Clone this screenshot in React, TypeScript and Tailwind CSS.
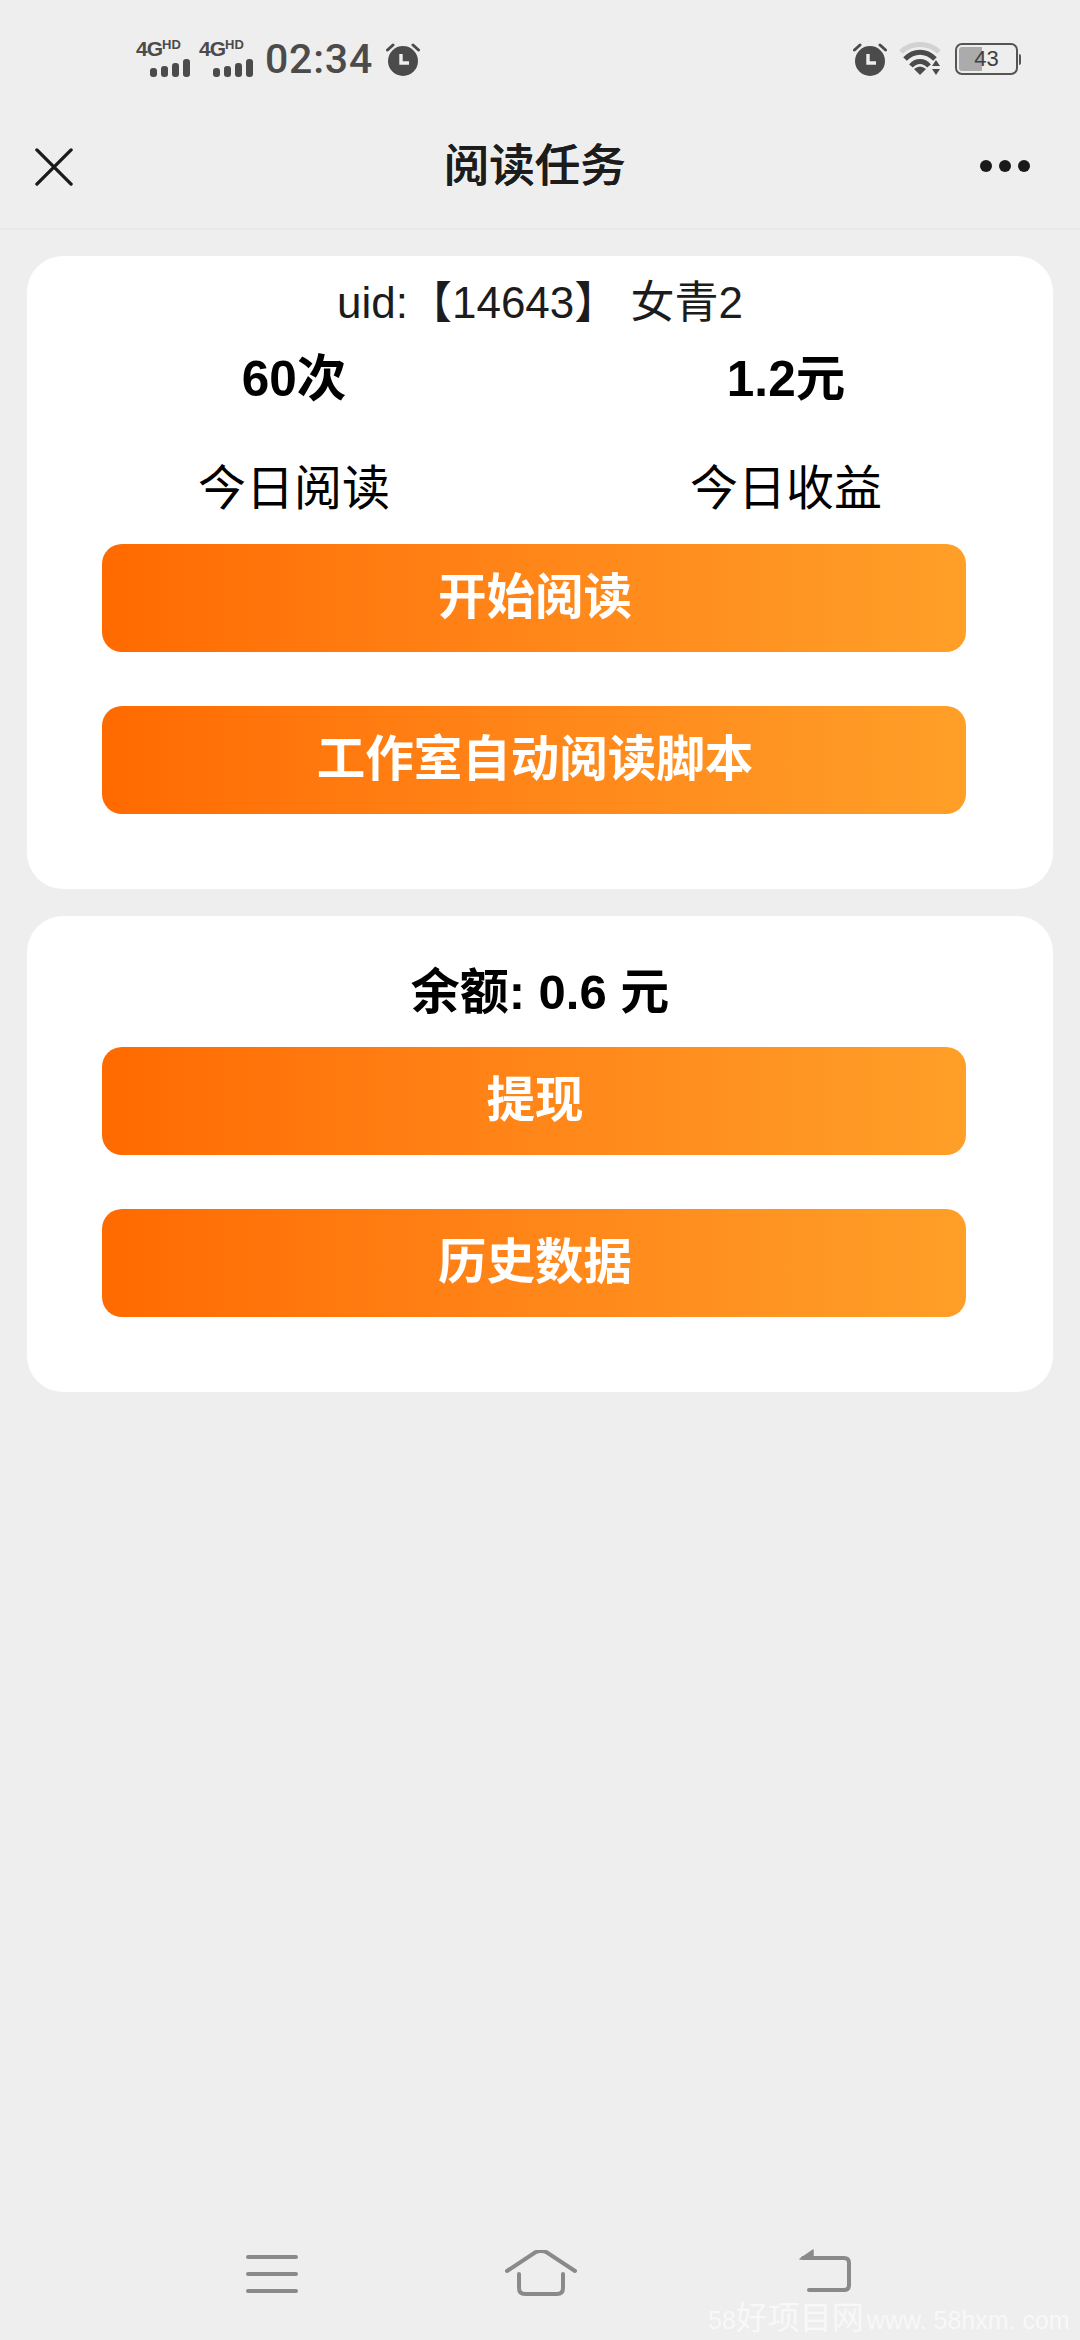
const CJK = "font-['Liberation_Sans','Noto_Sans_CJK_SC',sans-serif]";

function Signal() {
  return (
    <div className="relative h-[36px] w-[54px] text-[#4b4b4b]">
      <span className="absolute left-0 top-[-5px] text-[21px] font-bold leading-[26px] tracking-[-1px]">4G</span>
      <span className="absolute left-[26px] top-[-3px] text-[13px] font-bold leading-[14px]">HD</span>
      <div className="absolute bottom-0 right-0 flex items-end gap-[4px]">
        <i className="block h-[9px] w-[7px] rounded-[3px] bg-[#4b4b4b]" />
        <i className="block h-[11px] w-[7px] rounded-[3px] bg-[#4b4b4b]" />
        <i className="block h-[14px] w-[7px] rounded-[3px] bg-[#4b4b4b]" />
        <i className="block h-[18px] w-[7px] rounded-[3px] bg-[#4b4b4b]" />
      </div>
    </div>
  );
}

function Alarm() {
  return (
    <svg width="34" height="34" viewBox="0 0 34 34">
      <circle cx="17" cy="19" r="15" fill="#4b4b4b" />
      <path d="M1.500 8 L7 3 M32.500 8 L27 3" stroke="#4b4b4b" strokeWidth="3" strokeLinecap="round" />
      <path d="M15 12 V21 H23" fill="none" stroke="#eee" strokeWidth="3.400" />
    </svg>
  );
}

function Wifi() {
  return (
    <svg width="44" height="34" viewBox="0 0 44 34">
      <path d="M2 10 C12 0 30 0 40 10" fill="none" stroke="#d2d2d2" strokeWidth="5" />
      <path d="M6 17 C15 8 27 8 36 17" fill="none" stroke="#4b4b4b" strokeWidth="5" />
      <path d="M12 24 C17 18 25 18 30 24" fill="none" stroke="#4b4b4b" strokeWidth="5" />
      <path d="M15 27 Q21 22 27 27 L21 33 Z" fill="#4b4b4b" />
      <path d="M37 18 L41 24 H33 Z M33 27 H41 L37 33 Z" fill="#4b4b4b" />
    </svg>
  );
}

function Battery() {
  return (
    <div className="flex items-center">
      <div className="relative h-[32px] w-[63px] overflow-hidden rounded-[7px] border-[2.500px] border-[#555] p-[2px]">
        <div className="h-full w-[23px] rounded-l-[3px] bg-[#ababab]" />
        <span className="absolute inset-0 flex items-center justify-center text-[22px] leading-none text-[#3f3f3f]">43</span>
      </div>
      <div className="ml-[1px] h-[11px] w-[2px] rounded-r bg-[#555]" />
    </div>
  );
}

function OrangeButton({ label }: { label: string }) {
  return (
    <button className="flex h-[108px] w-full items-center justify-center rounded-[20px] bg-gradient-to-r from-[#ff6a00] to-[#ff9f28] pb-[2px] pl-[2px] text-[48.500px] font-bold text-white">
      {label}
    </button>
  );
}

export default function App() {
  return (
    <div className={`relative flex h-[2340px] w-[1080px] flex-col overflow-hidden bg-[#eeeeee] ${CJK}`}>
      <div className="flex h-[110px] shrink-0 items-center justify-between pl-[136px] pr-[59px] pt-[8px]">
        <div className="flex items-center gap-[9px]">
          <Signal />
          <Signal />
          <span className="ml-[3px] text-[41px] font-medium leading-none tracking-[0.8px] text-[#4b4b4b] font-['Roboto',sans-serif]">02:34</span>
          <div className="ml-[4px]"><Alarm /></div>
        </div>
        <div className="flex items-center gap-[12px]">
          <Alarm />
          <Wifi />
          <Battery />
        </div>
      </div>

      <div className="flex h-[120px] shrink-0 items-center justify-between border-b-2 border-[#e8e8e8] pl-[35px] pr-[50px] pb-[4px]">
        <svg width="38" height="38" viewBox="0 0 40 40">
          <path d="M2 2 L38 38 M38 2 L2 38" stroke="#1a1a1a" strokeWidth="3.500" strokeLinecap="round" />
        </svg>
        <span className="ml-[16px] text-[45.500px] font-medium leading-none text-[#1c1c1c] [text-shadow:0.5px_0_0_#1c1c1c]">阅读任务</span>
        <div className="mb-[3px] flex gap-[7px]">
          <i className="block h-[12px] w-[12px] rounded-full bg-[#1a1a1a]" />
          <i className="block h-[12px] w-[12px] rounded-full bg-[#1a1a1a]" />
          <i className="block h-[12px] w-[12px] rounded-full bg-[#1a1a1a]" />
        </div>
      </div>

      <div className="flex flex-col gap-[27px] px-[27px] pt-[26px]">
        <div className="flex h-[633px] flex-col rounded-[36px] bg-white pl-[75px] pr-[87px]">
          <div className="-mr-[12px] flex h-[90px] items-center justify-center pt-[4px] text-[44px] leading-none text-[#1c1c1c] whitespace-pre">uid:【14643】 女青2</div>
          <div className="-ml-[54px] -mr-[66px] grid h-[66px] grid-cols-2 font-bold text-[49.500px] leading-none text-black">
            <div className="flex items-center justify-center">60次</div>
            <div className="flex items-center justify-center">1.2元</div>
          </div>
          <div className="-ml-[54px] -mr-[66px] grid h-[132px] grid-cols-2 pt-[21px] text-[48px] leading-none text-black">
            <div className="flex items-center justify-center">今日阅读</div>
            <div className="flex items-center justify-center">今日收益</div>
          </div>
          <div className="flex flex-col gap-[54px]">
            <OrangeButton label="开始阅读" />
            <OrangeButton label="工作室自动阅读脚本" />
          </div>
        </div>

        <div className="flex h-[476px] flex-col rounded-[36px] bg-white pl-[75px] pr-[87px]">
          <div className="-mr-[12px] flex h-[131px] items-center justify-center pt-[22px] text-[49px] font-bold leading-none text-black">余额: 0.6 元</div>
          <div className="flex flex-col gap-[54px]">
            <OrangeButton label="提现" />
            <OrangeButton label="历史数据" />
          </div>
        </div>
      </div>

      <div className="mt-auto flex h-[92px] items-start pt-[6px]">
        <div className="ml-[244px]">
          <svg width="54" height="40" viewBox="0 0 54 40">
            <path d="M4 3 H52 M4 20 H52 M4 37 H52" stroke="#8a8a8a" strokeWidth="4" strokeLinecap="round" />
          </svg>
        </div>
        <div className="ml-[207px] -mt-[4px]">
          <svg width="72" height="46" viewBox="0 0 72 46">
            <path d="M2 21 L30 2.500 Q36 -0.500 42 2.500 L70 21" fill="none" stroke="#8a8a8a" strokeWidth="4" strokeLinecap="round" />
            <path d="M14 24 V38 Q14 44 20 44 H52 Q58 44 58 38 V24" fill="none" stroke="#8a8a8a" strokeWidth="4" strokeLinecap="round" />
          </svg>
        </div>
        <div className="ml-[222px] -mt-[5px]">
          <svg width="52" height="44" viewBox="0 0 52 44">
            <path d="M4 9 H45 Q50 9 50 14 V36 Q50 41 45 41 H10" fill="none" stroke="#8a8a8a" strokeWidth="4" strokeLinecap="round" />
            <path d="M1 10 L14 1 V10 Z" fill="#8a8a8a" stroke="#8a8a8a" strokeWidth="1.500" strokeLinejoin="round" />
          </svg>
        </div>
      </div>

      <div className="absolute bottom-[6px] left-[708px] flex items-baseline whitespace-pre text-[25px] leading-none text-white/60">58<span className="text-[32px]">好项目网</span><span className="ml-[3px]">www. 58hxm. com</span></div>
    </div>
  );
}
